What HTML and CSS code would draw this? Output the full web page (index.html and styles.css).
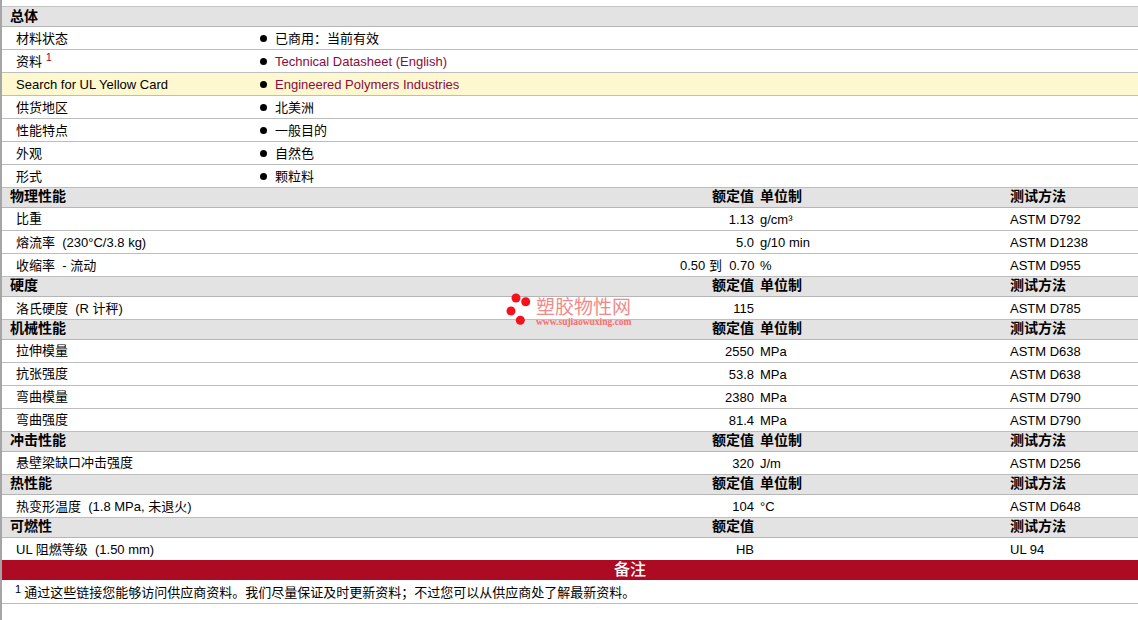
FILE: index.html
```html
<!DOCTYPE html>
<html lang="zh">
<head>
<meta charset="utf-8">
<title>塑胶物性</title>
<link rel="stylesheet" href="styles.css">
</head>
<body>
<div class="page">
  <div class="row head"><span class="name">总体</span></div>
  <div class="row info"><span class="name">材料状态</span><span class="dot"></span><span>已商用：当前有效</span></div>
  <div class="row info"><span class="name">资料 <sup class="link">1</sup></span><span class="dot"></span><span class="link">Technical Datasheet (English)</span></div>
  <div class="row info hl"><span class="name">Search for UL Yellow Card</span><span class="dot"></span><span class="link">Engineered Polymers Industries</span></div>
  <div class="row info"><span class="name">供货地区</span><span class="dot"></span><span>北美洲</span></div>
  <div class="row info"><span class="name">性能特点</span><span class="dot"></span><span>一般目的</span></div>
  <div class="row info"><span class="name">外观</span><span class="dot"></span><span>自然色</span></div>
  <div class="row info"><span class="name">形式</span><span class="dot"></span><span>颗粒料</span></div>

  <div class="row head prop"><span class="name">物理性能</span><span class="val">额定值</span><span class="unit">单位制</span><span>测试方法</span></div>
  <div class="row prop"><span class="name up">比重</span><span class="val">1.13</span><span class="unit">g/cm³</span><span>ASTM D792</span></div>
  <div class="row prop"><span class="name">熔流率&nbsp; (230°C/3.8 kg)</span><span class="val">5.0</span><span class="unit">g/10 min</span><span>ASTM D1238</span></div>
  <div class="row prop"><span class="name">收缩率&nbsp; - 流动</span><span class="val">0.50 到&nbsp; 0.70</span><span class="unit">%</span><span>ASTM D955</span></div>

  <div class="row head prop"><span class="name">硬度</span><span class="val">额定值</span><span class="unit">单位制</span><span>测试方法</span></div>
  <div class="row prop"><span class="name">洛氏硬度&nbsp; (R 计秤)</span><span class="val">115</span><span class="unit"></span><span>ASTM D785</span></div>

  <div class="row head prop"><span class="name">机械性能</span><span class="val">额定值</span><span class="unit">单位制</span><span>测试方法</span></div>
  <div class="row prop"><span class="name up">拉伸模量</span><span class="val">2550</span><span class="unit">MPa</span><span>ASTM D638</span></div>
  <div class="row prop"><span class="name up">抗张强度</span><span class="val">53.8</span><span class="unit">MPa</span><span>ASTM D638</span></div>
  <div class="row prop"><span class="name up">弯曲模量</span><span class="val">2380</span><span class="unit">MPa</span><span>ASTM D790</span></div>
  <div class="row prop"><span class="name up">弯曲强度</span><span class="val">81.4</span><span class="unit">MPa</span><span>ASTM D790</span></div>

  <div class="row head prop"><span class="name">冲击性能</span><span class="val">额定值</span><span class="unit">单位制</span><span>测试方法</span></div>
  <div class="row prop"><span class="name up">悬壁梁缺口冲击强度</span><span class="val">320</span><span class="unit">J/m</span><span>ASTM D256</span></div>

  <div class="row head prop"><span class="name">热性能</span><span class="val">额定值</span><span class="unit">单位制</span><span>测试方法</span></div>
  <div class="row prop"><span class="name">热变形温度&nbsp; (1.8 MPa, 未退火)</span><span class="val">104</span><span class="unit">°C</span><span>ASTM D648</span></div>

  <div class="row head prop"><span class="name">可燃性</span><span class="val">额定值</span><span class="unit"></span><span>测试方法</span></div>
  <div class="row prop last"><span class="name">UL 阻燃等级&nbsp; (1.50 mm)</span><span class="val">HB</span><span class="unit"></span><span>UL 94</span></div>

  <div class="banner">备注</div>
  <div class="note"><sup>1</sup><span>通过这些链接您能够访问供应商资料。我们尽量保证及时更新资料；不过您可以从供应商处了解最新资料。</span></div>

  <div class="mark">
    <svg class="mark-icon" width="26" height="34" viewBox="0 0 26 34" aria-hidden="true">
      <circle cx="11" cy="6" r="4.500"/>
      <circle cx="20.700" cy="9.700" r="4.500"/>
      <circle cx="6" cy="19" r="4.500"/>
      <circle cx="15.300" cy="28.300" r="4.500"/>
    </svg>
    <div class="mark-text">
      <div class="mark-cn">塑胶物性网</div>
      <div class="mark-url">www.sujiaowuxing.com</div>
    </div>
  </div>
</div>
</body>
</html>
```
FILE: styles.css
```css
* { box-sizing: border-box; }
html, body { margin: 0; padding: 0; background: #fff; }
body {
  font-family: "Liberation Sans", "Noto Sans CJK SC", sans-serif;
  font-size: 13px;
  line-height: 15px;
  color: #000;
  overflow: hidden;
}
.page {
  position: relative;
  width: 1138px;
  height: 620px;
  padding-top: 6px;
  border-left: 2px solid #a5a5a5;
}
.row {
  display: flex;
  align-items: center;
  height: 23px;
  padding-left: 14px;
  border-bottom: 1px solid #bdbdbd;
  white-space: nowrap;
}
.head {
  height: 20px;
  padding-left: 8px;
  padding-bottom: 2px;
  background: #e3e3e3;
  font-size: 14px;
  font-weight: bold;
  border-bottom: 1px solid #b5b5b5;
}
.head:first-child {
  height: 21px;
  padding-bottom: 1px;
  border-top: 1px solid #c4c4c4;
}
.info .name { width: 244px; }
.dot {
  width: 7px;
  height: 7px;
  margin: 1px 8px 0 0;
  border-radius: 50%;
  background: #000;
}
.hl { background: #fdf8cf; }
.link { color: #8c0a3c; }
sup {
  font-size: 11px;
  line-height: 0;
  vertical-align: 5px;
}
.prop .name { width: 664px; }
.prop .name.up { margin-bottom: 2px; }
.head.prop .name { width: 670px; }
.val { width: 74px; text-align: right; }
.unit { width: 250px; margin-left: 6px; }
.last {
  height: 22px;
  border-bottom: 0;
}
.banner {
  height: 20px;
  background: #ad0a24;
  color: #fff;
  font-family: "Noto Sans CJK SC", sans-serif;
  font-size: 16px;
  font-weight: 500;
  line-height: 17px;
  text-align: center;
  padding-left: 120px;
}
.note {
  display: flex;
  align-items: center;
  gap: 3px;
  height: 24px;
  padding: 2px 0 0 13px;
  border-bottom: 1px solid #bdbdbd;
}
.note sup { margin-bottom: 7px; }
.mark {
  position: absolute;
  left: 503px;
  top: 292px;
  display: flex;
  gap: 5px;
}
.mark-icon { fill: #f5101c; }
.mark-text { padding-top: 7px; }
.mark-cn {
  font-size: 19px;
  line-height: 18px;
  color: #f08a8a;
}
.mark-url {
  font-family: "Liberation Serif", serif;
  font-size: 9.500px;
  font-weight: bold;
  line-height: 10px;
  color: #f07070;
}
```
